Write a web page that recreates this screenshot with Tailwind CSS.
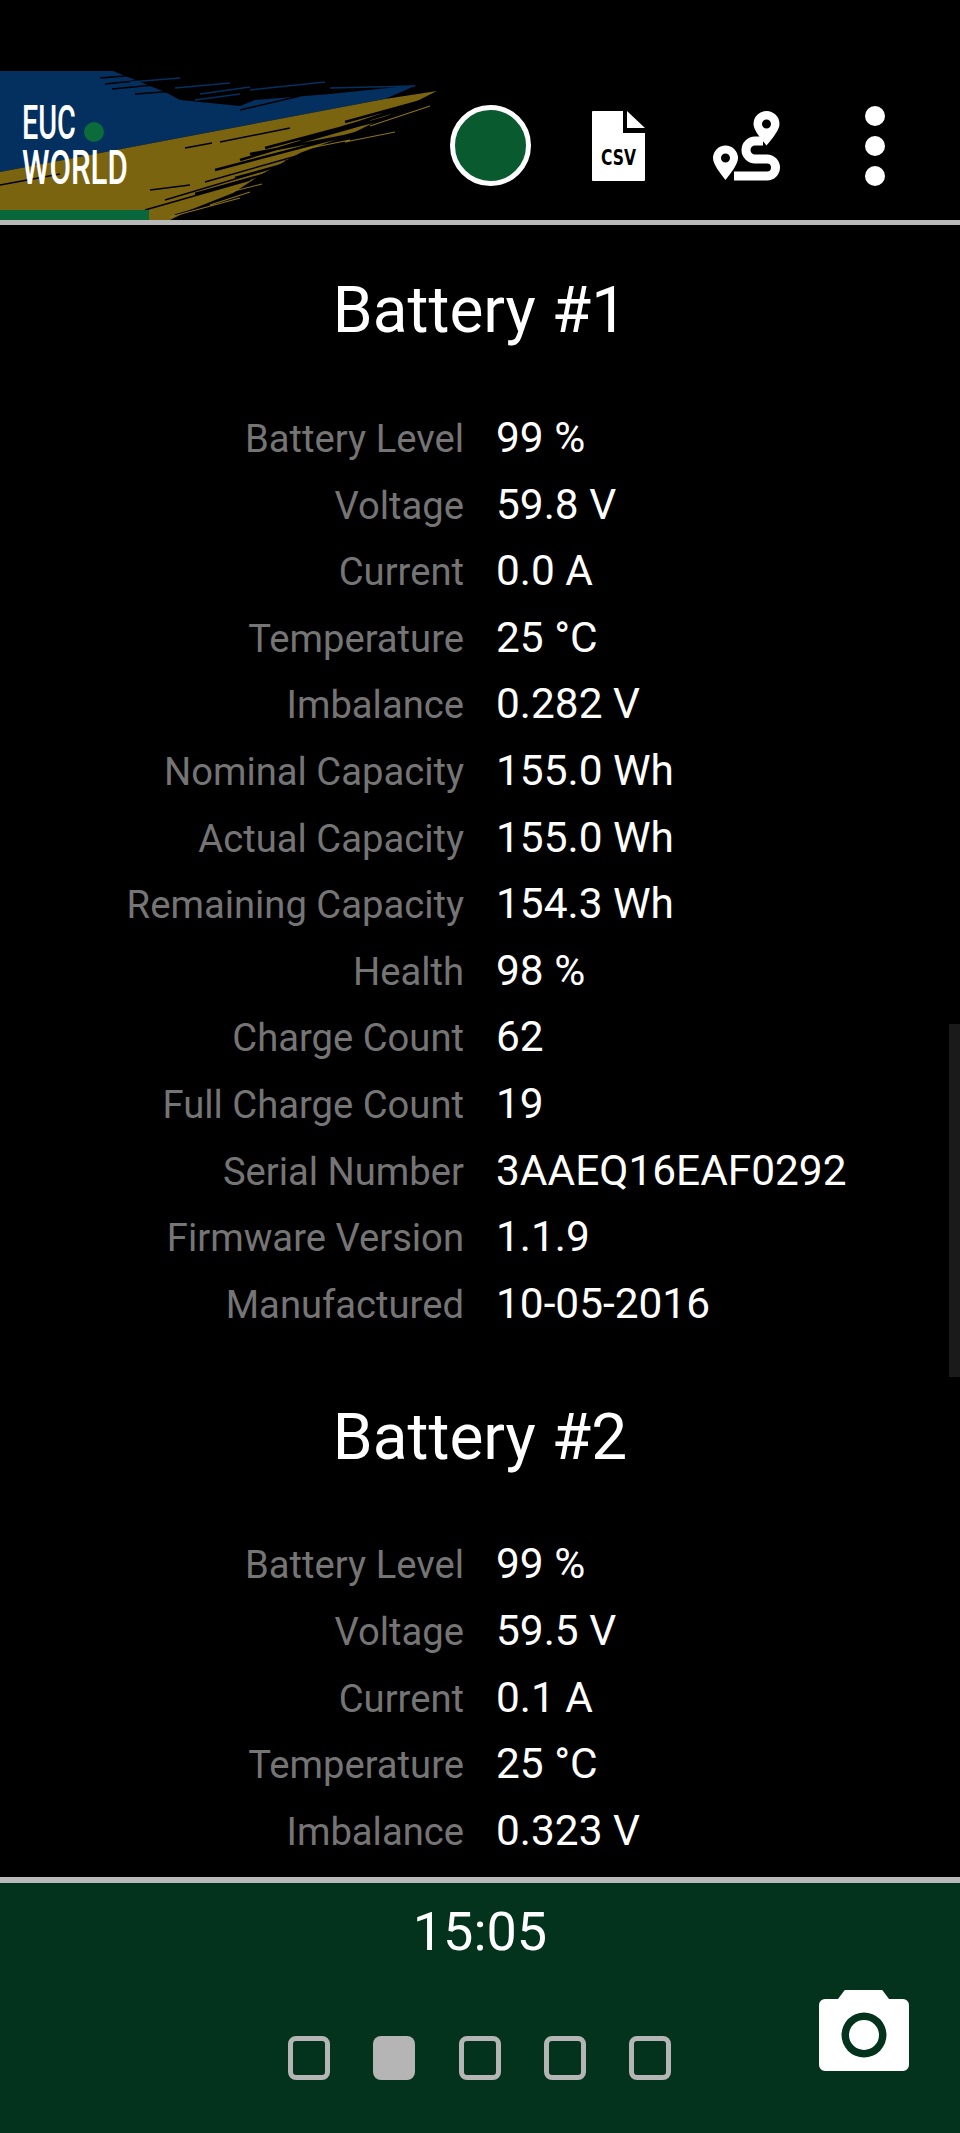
<!DOCTYPE html>
<html>
<head>
  <meta charset="UTF-8">
  <meta name="viewport" content="width=device-width, initial-scale=1.0">
  <script src="https://cdn.jsdelivr.net/npm/@tailwindcss/browser@4"></script>
</head>
<body class="bg-black [font-family:Roboto,sans-serif]">
<div class="relative flex h-[2133px] w-[960px] flex-col overflow-hidden bg-black">

  <!-- header -->
  <header class="flex h-[225px] shrink-0 items-start border-b-[5px] border-[#b9b9b9] pt-[70px]">
    <div class="relative h-[150px] w-[450px] shrink-0 overflow-hidden">
      <svg class="block" width="450" height="150" viewBox="0 0 450 150">
        <polygon fill="#03305f" points="0,1 113,1 165,22 180,30 240,36 255,30 330,24 417,15 385,29 0,102"/>
        <polygon fill="#7a6410" points="0,102 385,29 437,21 353,63 300,83 262,104 233,123 190,140 170,150 149,150 0,150"/>
        <!-- brush strokes -->
        <path fill="none" stroke="#000" stroke-width="1.500" d="M100 8L150 4M105 14L165 8M112 19L175 13M135 24L190 20M185 78L212 73M220 72L290 58M205 112L300 85M145 140L250 110M165 130L265 100M175 145L245 125M0 115L60 104M150 120L190 115M240 40L300 26"/>
        <path fill="none" stroke="#000" stroke-width="2.500" d="M240 90L340 60M215 100L360 62M300 70L400 40M330 62L420 32M265 78L370 50M290 75L395 45M250 84L345 66M285 92L350 72M235 108L300 90M315 66L405 44M345 52L425 30M195 124L270 103"/>
        <path fill="none" stroke="#03305f" stroke-width="1.500" d="M130 12L180 8M175 18L230 13M200 24L250 17M250 20L325 12M330 18L415 16M195 30L240 24"/>
        <path fill="none" stroke="#8a7216" stroke-width="1.200" d="M345 72L395 62M230 122L262 114M170 147L240 128M370 56L430 36M300 80L350 70M210 135L250 122"/>
        <rect x="0" y="140" width="149" height="10" fill="#09683b"/>
        <circle cx="94" cy="62" r="10" fill="#0b6b3a"/>
      </svg>
      <span class="absolute left-[22px] top-[33px] origin-left scale-x-[0.6] text-[48px] leading-[40px] font-medium text-white">EUC</span>
      <span class="absolute left-[22px] top-[78px] origin-left scale-x-[0.65] text-[48px] leading-[40px] font-medium text-white">WORLD</span>
    </div>

    <div class="mt-[35px] size-[81px] shrink-0 rounded-full border-[5px] border-white bg-[#0a5a30]"></div>

    <svg class="ml-[61px] mt-[41px] shrink-0" width="53" height="70" viewBox="0 0 53 70">
      <path fill="#fff" d="M1 0H31V22H53V69a1 1 0 0 1-1 1H1a1 1 0 0 1-1-1V1a1 1 0 0 1 1-1zM35 0L53 17H35z"/>
      <text x="9" y="54" textLength="35" lengthAdjust="spacingAndGlyphs" font-family="DejaVu Sans" font-weight="700" font-size="21" fill="#000">CSV</text>
    </svg>

    <svg class="ml-[65px] mt-[41px] shrink-0" width="72" height="72" viewBox="0 0 72 72">
      <path fill="#fff" fill-rule="evenodd" d="M56.500 0a13 13 0 0 1 13 13c0 6-7.500 15-13 21.500C51 28 43.500 19 43.500 13a13 13 0 0 1 13-13zm0 8.500a4.500 4.500 0 1 0 0 9 4.500 4.500 0 0 0 0-9z"/>
      <path fill="#fff" fill-rule="evenodd" d="M15.500 34.500a12.500 12.500 0 0 1 12.500 12.500c0 6-7 15-12.500 22C10 62 3 53 3 47a12.500 12.500 0 0 1 12.500-12.500zm0 8a4.500 4.500 0 1 0 0 9 4.500 4.500 0 0 0 0-9z"/>
      <path fill="none" stroke="#fff" stroke-width="9" d="M53 30H45a9 9 0 0 0 0 18H57a8.500 8.500 0 0 1 0 17H24"/>
    </svg>

    <div class="ml-[83px] mt-[36px] flex shrink-0 flex-col gap-[10px]">
      <div class="size-[20px] rounded-full bg-white"></div>
      <div class="size-[20px] rounded-full bg-white"></div>
      <div class="size-[20px] rounded-full bg-white"></div>
    </div>
  </header>

  <!-- battery list -->
  <main class="flex-1 overflow-hidden pt-[51px]">
    <h2 class="h-[70px] text-center text-[64px] leading-[70px] text-white">Battery #1</h2>
    <dl class="mt-[59px] grid grid-cols-[464px_1fr] gap-x-[32px] auto-rows-[66.6px] items-baseline text-[38.200px] leading-[66.6px]">
      <dt class="text-right text-[#757575]">Battery Level</dt><dd class="text-[42.400px] text-white">99 %</dd>
      <dt class="text-right text-[#757575]">Voltage</dt><dd class="text-[42.400px] text-white">59.8 V</dd>
      <dt class="text-right text-[#757575]">Current</dt><dd class="text-[42.400px] text-white">0.0 A</dd>
      <dt class="text-right text-[#757575]">Temperature</dt><dd class="text-[42.400px] text-white">25 °C</dd>
      <dt class="text-right text-[#757575]">Imbalance</dt><dd class="text-[42.400px] text-white">0.282 V</dd>
      <dt class="text-right text-[#757575]">Nominal Capacity</dt><dd class="text-[42.400px] text-white">155.0 Wh</dd>
      <dt class="text-right text-[#757575]">Actual Capacity</dt><dd class="text-[42.400px] text-white">155.0 Wh</dd>
      <dt class="text-right text-[#757575]">Remaining Capacity</dt><dd class="text-[42.400px] text-white">154.3 Wh</dd>
      <dt class="text-right text-[#757575]">Health</dt><dd class="text-[42.400px] text-white">98 %</dd>
      <dt class="text-right text-[#757575]">Charge Count</dt><dd class="text-[42.400px] text-white">62</dd>
      <dt class="text-right text-[#757575]">Full Charge Count</dt><dd class="text-[42.400px] text-white">19</dd>
      <dt class="text-right text-[#757575]">Serial Number</dt><dd class="text-[42.400px] text-white">3AAEQ16EAF0292</dd>
      <dt class="text-right text-[#757575]">Firmware Version</dt><dd class="text-[42.400px] text-white">1.1.9</dd>
      <dt class="text-right text-[#757575]">Manufactured</dt><dd class="text-[42.400px] text-white">10-05-2016</dd>
    </dl>

    <h2 class="mt-[66px] h-[70px] text-center text-[64px] leading-[70px] text-white">Battery #2</h2>
    <dl class="mt-[58px] grid grid-cols-[464px_1fr] gap-x-[32px] auto-rows-[66.6px] items-baseline text-[38.200px] leading-[66.6px]">
      <dt class="text-right text-[#757575]">Battery Level</dt><dd class="text-[42.400px] text-white">99 %</dd>
      <dt class="text-right text-[#757575]">Voltage</dt><dd class="text-[42.400px] text-white">59.5 V</dd>
      <dt class="text-right text-[#757575]">Current</dt><dd class="text-[42.400px] text-white">0.1 A</dd>
      <dt class="text-right text-[#757575]">Temperature</dt><dd class="text-[42.400px] text-white">25 °C</dd>
      <dt class="text-right text-[#757575]">Imbalance</dt><dd class="text-[42.400px] text-white">0.323 V</dd>
    </dl>
  </main>

  <!-- scrollbar -->
  <div class="absolute right-0 top-[1024px] h-[353px] w-[11px] bg-[#1a1a1a]"></div>

  <!-- footer -->
  <footer class="relative h-[256px] shrink-0 border-t-[6px] border-[#b9b9b9] bg-[#03331c]">
    <div class="pt-[17px] text-center text-[54px] leading-[64px] text-white">15:05</div>
    <div class="mt-[72px] ml-[288px] flex gap-[43.300px]">
      <div class="h-[44px] w-[42px] rounded-[8px] border-[5px] border-[#b5b5b5]"></div>
      <div class="h-[44px] w-[42px] rounded-[8px] bg-[#b5b5b5]"></div>
      <div class="h-[44px] w-[42px] rounded-[8px] border-[5px] border-[#b5b5b5]"></div>
      <div class="h-[44px] w-[42px] rounded-[8px] border-[5px] border-[#b5b5b5]"></div>
      <div class="h-[44px] w-[42px] rounded-[8px] border-[5px] border-[#b5b5b5]"></div>
    </div>
    <svg class="absolute left-[819px] top-[107px]" width="90" height="81" viewBox="0 0 90 81">
      <path fill="#fff" d="M6 9H19L25 1a2 2 0 0 1 2-1H62a2 2 0 0 1 2 1L70 9H84a6 6 0 0 1 6 6V75a6 6 0 0 1-6 6H6a6 6 0 0 1-6-6V15a6 6 0 0 1 6-6z"/>
      <circle cx="45" cy="45" r="22.500" fill="#03331c"/>
      <circle cx="45" cy="45" r="15" fill="#fff"/>
    </svg>
  </footer>
</div>
</body>
</html>
